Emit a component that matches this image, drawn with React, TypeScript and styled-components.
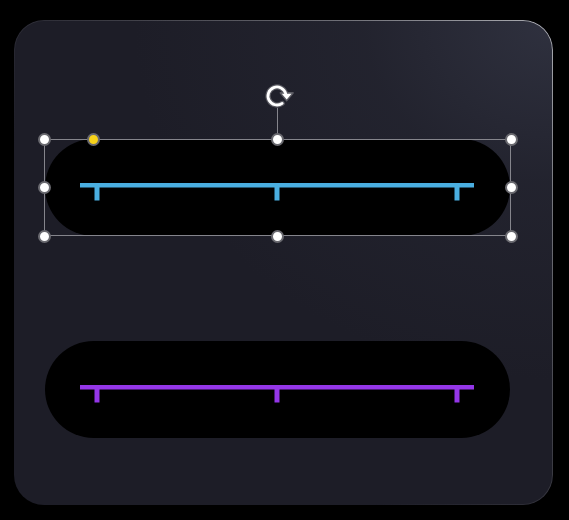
import React from "react";
import styled, { createGlobalStyle } from "styled-components";

const Global = createGlobalStyle`
  html, body { margin: 0; padding: 0; background: #000; }
  body { font-family: "Inter", "Liberation Sans", sans-serif; }
`;

const Page = styled.div`
  width: 569px;
  height: 520px;
  background: #000;
  padding: 20px 0 0 14px;
  box-sizing: border-box;
`;

const Card = styled.div`
  position: relative;
  width: 539px;
  height: 485px;
  box-sizing: border-box;
  border-radius: 30px;
  background:
    radial-gradient(ellipse 420px 360px at 100% 0%, rgba(48, 50, 64, 0.95) 0%, rgba(38, 39, 51, 0.6) 45%, rgba(30, 30, 40, 0) 100%),
    #1d1d27;
  display: flex;
  flex-direction: column;
  gap: 105px;
  padding: 119px 0 0 31px;

  &::before {
    content: "";
    position: absolute;
    inset: 0;
    border-radius: inherit;
    padding: 1px;
    background: linear-gradient(225deg, rgba(255,255,255,0.6) 0%, rgba(255,255,255,0.3) 25%, rgba(255,255,255,0.08) 50%, rgba(255,255,255,0) 65%);
    -webkit-mask: linear-gradient(#000 0 0) content-box, linear-gradient(#000 0 0);
    -webkit-mask-composite: xor;
    mask-composite: exclude;
    pointer-events: none;
  }
`;

const ShapeWrap = styled.div`
  position: relative;
  width: 465px;
`;

const Pill = styled.div`
  width: 465px;
  height: 97px;
  border-radius: 48.5px;
  background: #000;
  box-sizing: border-box;
  padding: 44px 0 0 35px;
  display: flex;
  align-items: flex-start;
`;

const Selection = styled.div`
  position: absolute;
  left: -1px;
  right: -1px;
  top: 0;
  bottom: 0;
  box-shadow: inset 0 0 0 1px #85858c;
  pointer-events: none;
`;

const Handle = styled.div<{ $x: string; $y: string; $yellow?: boolean }>`
  position: absolute;
  left: ${(p) => p.$x};
  top: ${(p) => p.$y};
  width: 13px;
  height: 13px;
  margin: -6.5px 0 0 -6.5px;
  border-radius: 50%;
  box-sizing: border-box;
  background: ${(p) => (p.$yellow ? "#f7d21a" : "#ffffff")};
  border: 2px solid #6a6a70;
`;

const RotateLine = styled.div`
  position: absolute;
  left: 50%;
  top: -31px;
  width: 1px;
  height: 31px;
  margin-left: -0.5px;
  background: #85858c;
`;

const RotateIcon = styled.svg`
  position: absolute;
  left: 50%;
  top: -58px;
  margin-left: -15px;
  overflow: visible;
`;

const Ruler = ({ color }: { color: string }) => (
  <svg width="394" height="18" viewBox="0 0 394 18" style={{ display: "block" }}>
    <rect x="0" y="0" width="394" height="4.5" fill={color} />
    <rect x="14.5" y="0" width="5" height="17.5" fill={color} />
    <rect x="194.5" y="0" width="5" height="17.5" fill={color} />
    <rect x="374.5" y="0" width="5" height="17.5" fill={color} />
  </svg>
);

const arc = (() => {
  const cx = 14, cy = 15, r = 9;
  const a0 = (55 * Math.PI) / 180;
  const a1 = (345 * Math.PI) / 180;
  const x0 = cx + r * Math.cos(a0), y0 = cy + r * Math.sin(a0);
  const x1 = cx + r * Math.cos(a1), y1 = cy + r * Math.sin(a1);
  return `M ${x0.toFixed(2)} ${y0.toFixed(2)} A ${r} ${r} 0 1 1 ${x1.toFixed(2)} ${y1.toFixed(2)}`;
})();

export default function App() {
  return (
    <>
      <Global />
      <Page>
        <Card>
          <ShapeWrap>
            <Pill>
              <Ruler color="#4aaee0" />
            </Pill>
            <Selection>
              <RotateLine />
              <RotateIcon width="32" height="30" viewBox="0 0 32 30">
                <path d={arc} fill="none" stroke="#5a5a62" strokeWidth="5.2" strokeLinecap="round" />
                <path d="M 17.5 12 L 30 12 L 23.7 19.5 Z" fill="#5a5a62" stroke="#5a5a62" strokeWidth="1.8" strokeLinejoin="round" />
                <path d={arc} fill="none" stroke="#ffffff" strokeWidth="2.8" strokeLinecap="round" />
                <path d="M 18.8 12.7 L 28.6 12.7 L 23.7 18.4 Z" fill="#ffffff" />
              </RotateIcon>
              <Handle $x="0%" $y="0%" />
              <Handle $x="50%" $y="0%" />
              <Handle $x="100%" $y="0%" />
              <Handle $x="0%" $y="50%" />
              <Handle $x="100%" $y="50%" />
              <Handle $x="0%" $y="100%" />
              <Handle $x="50%" $y="100%" />
              <Handle $x="100%" $y="100%" />
              <Handle $x="49px" $y="0%" $yellow />
            </Selection>
          </ShapeWrap>
          <ShapeWrap>
            <Pill>
              <Ruler color="#9436e8" />
            </Pill>
          </ShapeWrap>
        </Card>
      </Page>
    </>
  );
}
